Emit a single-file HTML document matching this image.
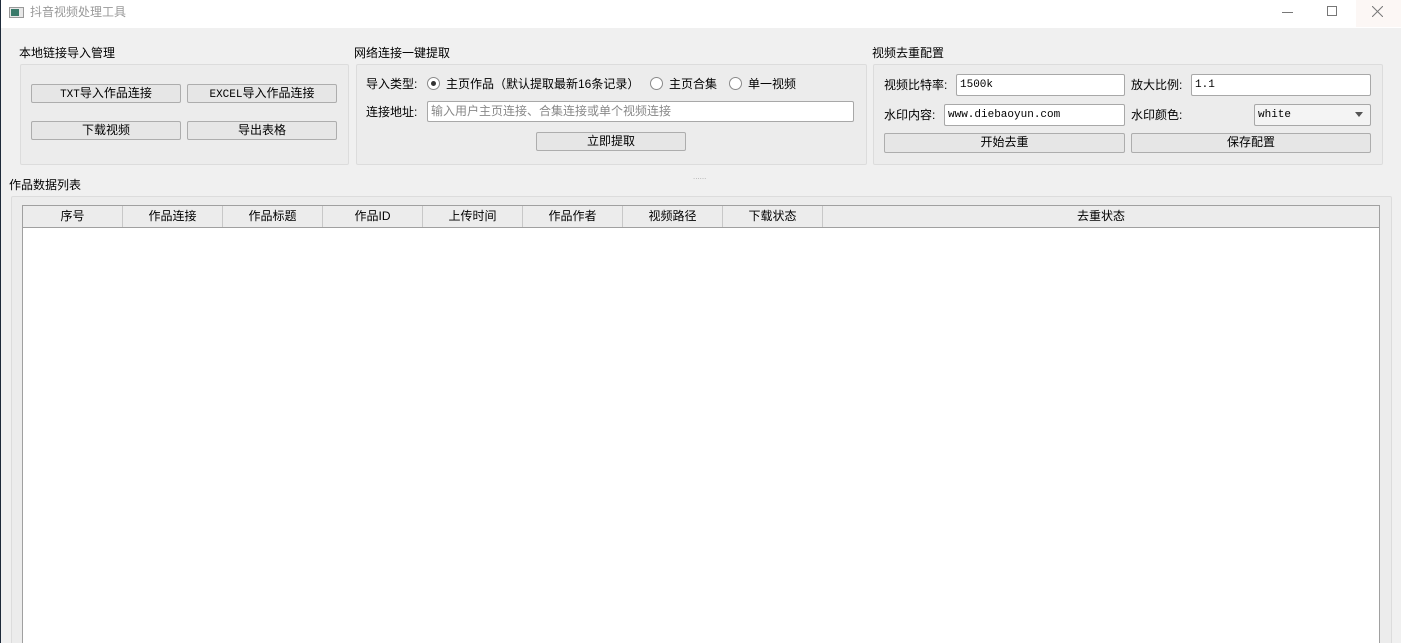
<!DOCTYPE html>
<html><head><meta charset="utf-8"><style>
*{box-sizing:border-box;margin:0;padding:0}
html,body{width:1401px;height:643px;overflow:hidden}
body{background:#f0f0f0;position:relative;font-family:"Liberation Sans","Noto Sans CJK SC",sans-serif;font-size:12px;color:#000}
.a{position:absolute;white-space:nowrap;line-height:14px}
.tb{position:absolute;left:0;top:0;width:1401px;height:28px;background:#fff}
.grp{position:absolute;border:1px solid #dcdcdc;border-radius:2px;background:#ececec}
.btn{position:absolute;border:1px solid #adadad;border-radius:2px;background:#e6e6e6;text-align:center;line-height:17px;font-size:12px}
.inp{position:absolute;background:#fff;border:1px solid #a8a8a8;border-radius:2px;padding-left:3px;line-height:20px;font-family:"Liberation Mono",monospace;font-size:11px}
.rad{position:absolute;width:13px;height:13px;border:1px solid #8a8a8a;border-radius:50%;background:#fff}
.th{position:absolute;top:0;height:21px;border-right:1px solid #c8c8c8;text-align:center;line-height:21px;background:#ececec}
</style></head><body>
<div class="tb"></div>
<div style="left:0;top:0;width:1px;height:643px;background:#1e2a3a;position:absolute"></div>
<div style="position:absolute;left:9px;top:7px;width:15px;height:11px;border:1px solid #999;background:#e8e8e8"><div style="position:absolute;left:1px;top:1px;width:8px;height:7px;background:#3a7a6a"></div></div>
<div class="a" style="left:30px;top:5px;color:#999;font-size:12px">抖音视频处理工具</div>
<div style="position:absolute;left:1282px;top:12px;width:11px;height:1px;background:#777"></div>
<div style="position:absolute;left:1327px;top:6px;width:10px;height:10px;border:1px solid #777"></div>
<div style="position:absolute;left:1356px;top:0;width:45px;height:27px;background:#fcf7f5"></div>
<svg style="position:absolute;left:1372px;top:6px" width="11" height="11"><path d="M0 0L11 11M11 0L0 11" stroke="#777" stroke-width="1"/></svg>

<div class="a" style="left:19px;top:46px">本地链接导入管理</div>
<div class="grp" style="left:20px;top:64px;width:329px;height:101px"></div>
<div class="btn" style="left:31px;top:84px;width:150px;height:19px"><span style="font-family:'Liberation Mono',monospace;font-size:11px">TXT</span>导入作品连接</div>
<div class="btn" style="left:187px;top:84px;width:150px;height:19px"><span style="font-family:'Liberation Mono',monospace;font-size:11px">EXCEL</span>导入作品连接</div>
<div class="btn" style="left:31px;top:121px;width:150px;height:19px">下载视频</div>
<div class="btn" style="left:187px;top:121px;width:150px;height:19px">导出表格</div>

<div class="a" style="left:354px;top:46px">网络连接一键提取</div>
<div class="grp" style="left:356px;top:64px;width:511px;height:101px"></div>
<div class="a" style="left:366px;top:77px">导入类型:</div>
<div class="rad" style="left:427px;top:77px"><div style="position:absolute;left:3px;top:3px;width:5px;height:5px;border-radius:50%;background:#333"></div></div>
<div class="a" style="left:446px;top:77px">主页作品（默认提取最新16条记录）</div>
<div class="rad" style="left:650px;top:77px"></div>
<div class="a" style="left:669px;top:77px">主页合集</div>
<div class="rad" style="left:729px;top:77px"></div>
<div class="a" style="left:748px;top:77px">单一视频</div>
<div class="a" style="left:366px;top:105px">连接地址:</div>
<div class="inp" style="left:427px;top:101px;width:427px;height:21px;font-family:'Liberation Sans','Noto Sans CJK SC',sans-serif;font-size:12px;color:#888;line-height:19px">输入用户主页连接、合集连接或单个视频连接</div>
<div class="btn" style="left:536px;top:132px;width:150px;height:19px">立即提取</div>
<div class="a" style="left:693px;top:170px;color:#aaa;font-size:8px">......</div>

<div class="a" style="left:872px;top:46px">视频去重配置</div>
<div class="grp" style="left:873px;top:64px;width:510px;height:101px"></div>
<div class="a" style="left:884px;top:78px">视频比特率:</div>
<div class="inp" style="left:956px;top:74px;width:169px;height:22px">1500k</div>
<div class="a" style="left:1131px;top:78px">放大比例:</div>
<div class="inp" style="left:1191px;top:74px;width:180px;height:22px">1.1</div>
<div class="a" style="left:884px;top:108px">水印内容:</div>
<div class="inp" style="left:944px;top:104px;width:181px;height:22px">www.diebaoyun.com</div>
<div class="a" style="left:1131px;top:108px">水印颜色:</div>
<div class="inp" style="left:1254px;top:104px;width:117px;height:22px;background:#f4f4f4">white</div>
<svg style="position:absolute;left:1355px;top:112px" width="8" height="5"><path d="M0 0H8L4 5Z" fill="#555"/></svg>
<div class="btn" style="left:884px;top:133px;width:241px;height:20px">开始去重</div>
<div class="btn" style="left:1131px;top:133px;width:240px;height:20px">保存配置</div>

<div class="a" style="left:9px;top:178px">作品数据列表</div>
<div class="grp" style="left:11px;top:196px;width:1381px;height:452px"></div>
<div style="position:absolute;left:22px;top:205px;width:1358px;height:442px;border:1px solid #a0a0a0;background:#fff">
<div style="position:absolute;left:0;top:0;width:1356px;height:22px;border-bottom:1px solid #a0a0a0;background:#ececec"></div>
<div class="th" style="left:0;width:100px">序号</div>
<div class="th" style="left:100px;width:100px">作品连接</div>
<div class="th" style="left:200px;width:100px">作品标题</div>
<div class="th" style="left:300px;width:100px">作品ID</div>
<div class="th" style="left:400px;width:100px">上传时间</div>
<div class="th" style="left:500px;width:100px">作品作者</div>
<div class="th" style="left:600px;width:100px">视频路径</div>
<div class="th" style="left:700px;width:100px">下载状态</div>
<div class="th" style="left:800px;width:556px;border-right:none">去重状态</div>
</div>
</body></html>
